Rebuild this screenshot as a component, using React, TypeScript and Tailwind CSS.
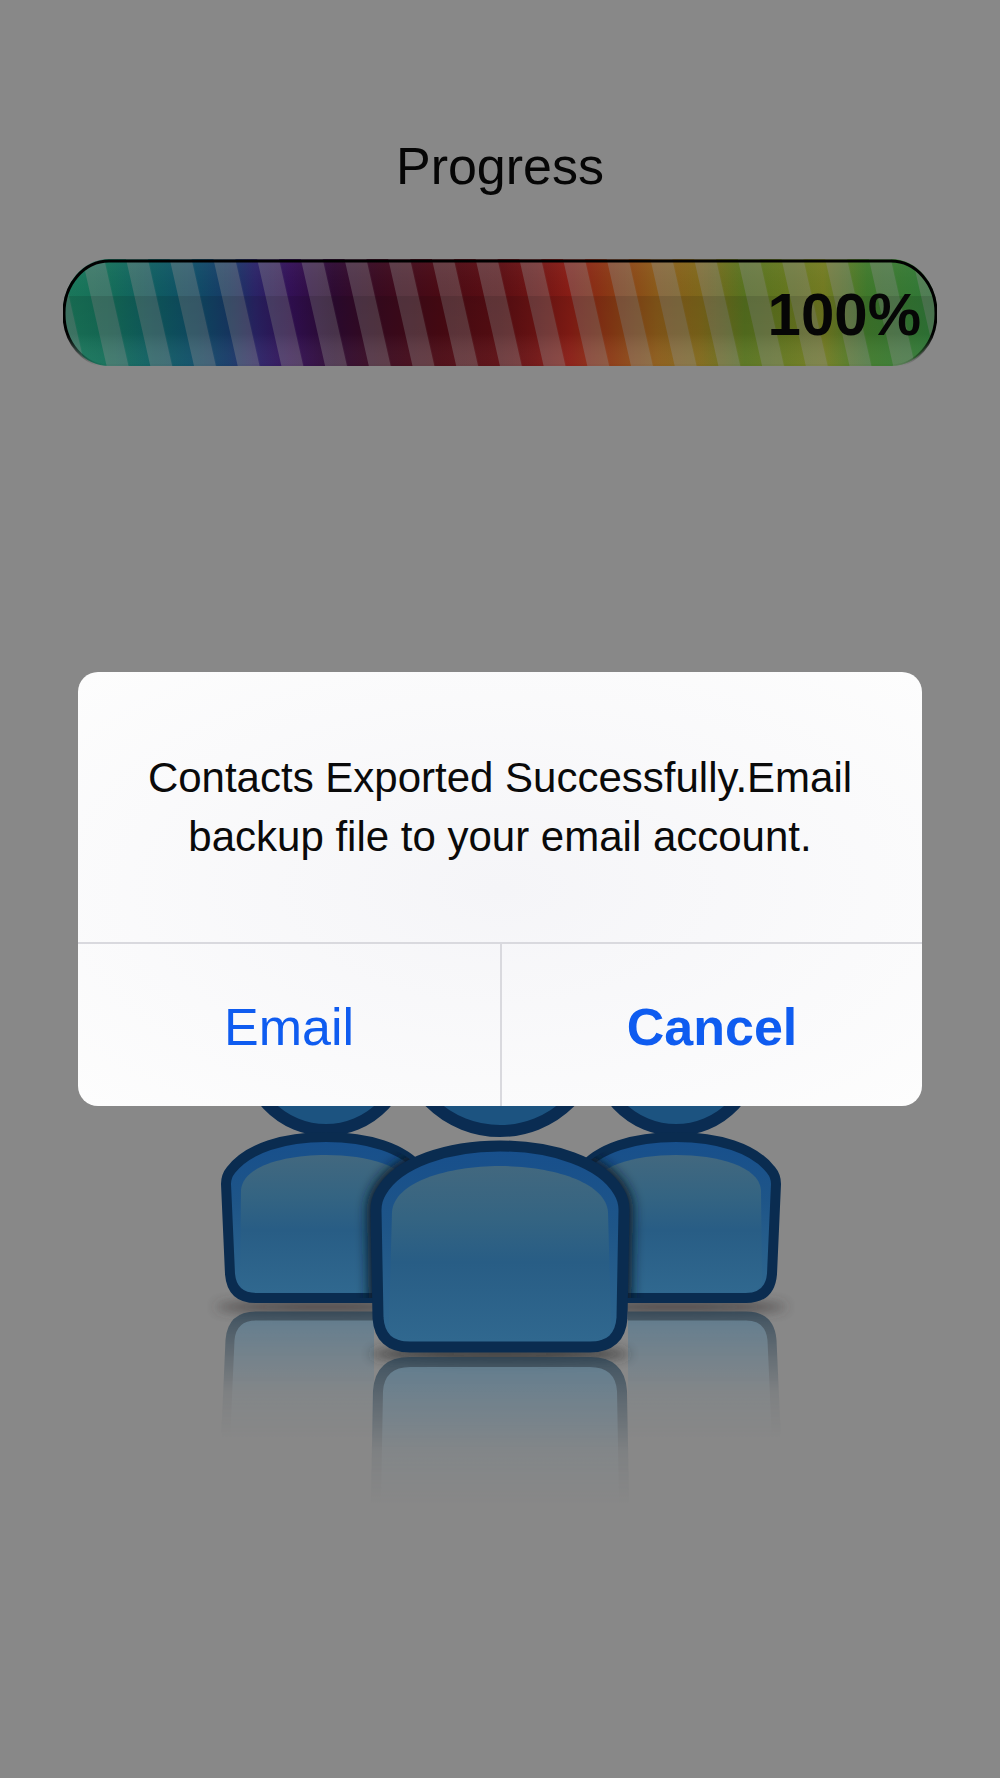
const STRIPE_COLORS = [
  [0, "#1b7a5c"],
  [5, "#15705a"],
  [10, "#0f5f62"],
  [15, "#0f4e68"],
  [19, "#173a68"],
  [22, "#2b2468"],
  [26, "#331057"],
  [31, "#2e0a32"],
  [36, "#3a0a20"],
  [43, "#4b0a14"],
  [50, "#5c0e13"],
  [54, "#701414"],
  [58, "#8a1d15"],
  [63, "#8c3c15"],
  [68, "#8c5c1a"],
  [73, "#80691b"],
  [78, "#587420"],
  [83, "#66781f"],
  [87, "#747c22"],
  [92, "#407a2c"],
  [100, "#2f7a3a"],
] as const;

const SIDE_BODY =
  "M226 1184 Q226 1176 231 1170 C248 1148 284 1137 326 1137 C368 1137 404 1148 421 1170 Q426 1176 426 1184 L422 1274 Q420 1298 396 1298 L256 1298 Q232 1298 230 1274 Z";
const SIDE_PANEL =
  "M241 1190 C243 1166 285 1155 326 1155 C367 1155 409 1166 411 1190 L411 1280 Q411 1292 398 1292 L254 1292 Q241 1292 240 1280 Z";
const MAIN_BODY =
  "M376 1210 Q376 1200 381 1192 C398 1162 448 1146 500 1146 C552 1146 602 1162 619 1192 Q624 1200 624 1210 L622 1318 Q620 1347 590 1347 L410 1347 Q380 1347 378 1318 Z";
const MAIN_PANEL =
  "M392 1212 C394 1182 448 1166 500 1166 C552 1166 606 1182 608 1212 L611 1324 Q611 1341 592 1341 L408 1341 Q389 1341 389 1324 Z";

function ProgressBar({ value }: { value: number }) {
  return (
    <div
      role="progressbar"
      aria-label="Progress"
      aria-valuenow={value}
      aria-valuemin={0}
      aria-valuemax={100}
      className="grid h-[107px] items-center"
    >
      <svg
        viewBox="0 0 874 107"
        preserveAspectRatio="none"
        className="col-start-1 row-start-1 h-full w-full"
        aria-hidden="true"
      >
        <defs>
          <linearGradient id="rainbow">
            {STRIPE_COLORS.map(([offset, color]) => (
              <stop key={offset} offset={`${offset}%`} stopColor={color} />
            ))}
          </linearGradient>
          <linearGradient id="shade" x2="0" y2="1">
            <stop offset="0" stopColor="#fff" stopOpacity="0.04" />
            <stop offset="0.35" stopColor="#000" stopOpacity="0.02" />
            <stop offset="0.35" stopColor="#000" stopOpacity="0.13" />
            <stop offset="0.7" stopColor="#000" stopOpacity="0.1" />
            <stop offset="1" stopColor="#fff" stopOpacity="0.03" />
          </linearGradient>
          <linearGradient id="rim" x2="0" y2="1">
            <stop offset="0.7" stopColor="#000" />
            <stop offset="1" stopColor="#000" stopOpacity="0" />
          </linearGradient>
          <pattern
            id="stripes"
            width="43.7"
            height="107"
            patternUnits="userSpaceOnUse"
            patternTransform="translate(63 0) skewX(12.8)"
          >
            <rect width="22" height="107" fill="#8c8c8c" fillOpacity="0.36" />
          </pattern>
        </defs>
        <rect width="874" height="107" rx="46" ry="53" fill="url(#rainbow)" />
        <rect width="874" height="107" rx="46" ry="53" fill="url(#stripes)" />
        <rect width="874" height="107" rx="46" ry="53" fill="url(#shade)" />
        <rect x="1" y="2" width="872" height="105" rx="45" ry="52" fill="none" stroke="url(#rim)" strokeWidth="3" />
      </svg>
      <span className="col-start-1 row-start-1 pt-1 pr-4 text-right text-[60px] leading-none font-bold text-[#060606]">
        {value}%
      </span>
    </div>
  );
}

function SidePerson() {
  return (
    <g>
      <ellipse cx="326" cy="1307" rx="110" ry="6" fill="#3a3434" opacity="0.8" filter="url(#soft)" />
      <g mask="url(#sideFade)">
        <path
          d={SIDE_BODY}
          transform="translate(0 2614) scale(1 -1)"
          fill="#557a92"
          stroke="#2b4355"
          strokeWidth="9"
        />
      </g>
      <ellipse cx="326" cy="1044" rx="82" ry="86" fill="#1c5380" stroke="#0a2c52" strokeWidth="12" />
      <path d={SIDE_BODY} fill="url(#body)" stroke="#0a2c50" strokeWidth="10" />
      <path d={SIDE_PANEL} fill="url(#panel)" />
    </g>
  );
}

function People() {
  return (
    <svg viewBox="200 920 600 620" className="w-3/5" role="img" aria-label="Contacts">
      <defs>
        <filter id="soft" x="-20%" y="-200%" width="140%" height="500%">
          <feGaussianBlur stdDeviation="6" />
        </filter>
        <linearGradient id="body" x2="0" y2="1">
          <stop offset="0" stopColor="#174f8c" />
          <stop offset="0.4" stopColor="#1e5588" />
          <stop offset="1" stopColor="#30688f" />
        </linearGradient>
        <linearGradient id="panel" x2="0" y2="1">
          <stop offset="0" stopColor="#42687f" />
          <stop offset="0.3" stopColor="#346482" />
          <stop offset="0.55" stopColor="#285d85" />
          <stop offset="1" stopColor="#30688f" />
        </linearGradient>
        <linearGradient id="fade" x2="0" y2="1">
          <stop offset="0" stopColor="#fff" stopOpacity="0.8" />
          <stop offset="0.3" stopColor="#fff" stopOpacity="0.45" />
          <stop offset="0.65" stopColor="#fff" stopOpacity="0.1" />
          <stop offset="1" stopColor="#fff" stopOpacity="0" />
        </linearGradient>
        <mask id="sideFade" maskUnits="userSpaceOnUse" x="200" y="1308" width="174" height="130">
          <rect x="200" y="1308" width="174" height="130" fill="url(#fade)" />
        </mask>
        <mask id="mainFade" maskUnits="userSpaceOnUse" x="350" y="1354" width="300" height="150">
          <rect x="350" y="1354" width="300" height="150" fill="url(#fade)" />
        </mask>
        <clipPath id="sideShapes">
          <path d={SIDE_BODY} />
          <path d={SIDE_BODY} transform="translate(1002 0) scale(-1 1)" />
        </clipPath>
      </defs>

      <SidePerson />
      <g transform="translate(1002 0) scale(-1 1)">
        <SidePerson />
      </g>

      {/* shadow the front figure casts on the two behind it */}
      <g clipPath="url(#sideShapes)">
        <path d={MAIN_BODY} fill="#0c1c2a" stroke="#0c1c2a" strokeWidth="18" filter="url(#soft)" />
      </g>

      <ellipse cx="500" cy="1354" rx="130" ry="7" fill="#2c2c2c" opacity="0.85" filter="url(#soft)" />
      <g mask="url(#mainFade)">
        <path
          d={MAIN_BODY}
          transform="translate(0 2709) scale(1 -1)"
          fill="#557a92"
          stroke="#2b4355"
          strokeWidth="10"
        />
      </g>
      <circle cx="500" cy="1032" r="99" fill="#1c5380" stroke="#0a2c52" strokeWidth="12" />
      <path d={MAIN_BODY} fill="url(#body)" stroke="#0a2c50" strokeWidth="11" />
      <path d={MAIN_PANEL} fill="url(#panel)" />
    </svg>
  );
}

function AlertDialog() {
  return (
    <div className="absolute inset-0 flex items-center px-[78px]">
      <div
        role="alertdialog"
        aria-modal="true"
        aria-describedby="alert-message"
        className="w-full overflow-hidden rounded-[20px] bg-[#fdfdfd] bg-radial from-[#f5f5f8] to-[#fdfdfd]"
      >
        <p
          id="alert-message"
          className="px-10 pt-[76px] pb-[76px] text-center text-[42px] leading-[59px] text-[#0a0a0a]"
        >
          Contacts Exported Successfully.Email backup file to your email account.
        </p>
        <div className="grid grid-cols-2 border-t-2 border-[#d9d9de] text-[52px] text-[#0f5cf0]">
          <button type="button" className="h-[162px] pt-1">
            Email
          </button>
          <button type="button" className="h-[162px] border-l-2 border-[#d9d9de] pt-1 font-bold">
            Cancel
          </button>
        </div>
      </div>
    </div>
  );
}

export default function App() {
  return (
    <div className="relative min-h-screen bg-[#888] font-['Liberation_Sans',Arial,sans-serif]">
      <main className="flex flex-col px-[63px] pt-[130px]">
        <h1 className="mb-[57px] text-center text-[52px] leading-[72px] text-[#060606]">Progress</h1>
        <ProgressBar value={100} />
        <div className="-mx-[63px] flex justify-center pt-[554px]">
          <People />
        </div>
      </main>
      <AlertDialog />
    </div>
  );
}
